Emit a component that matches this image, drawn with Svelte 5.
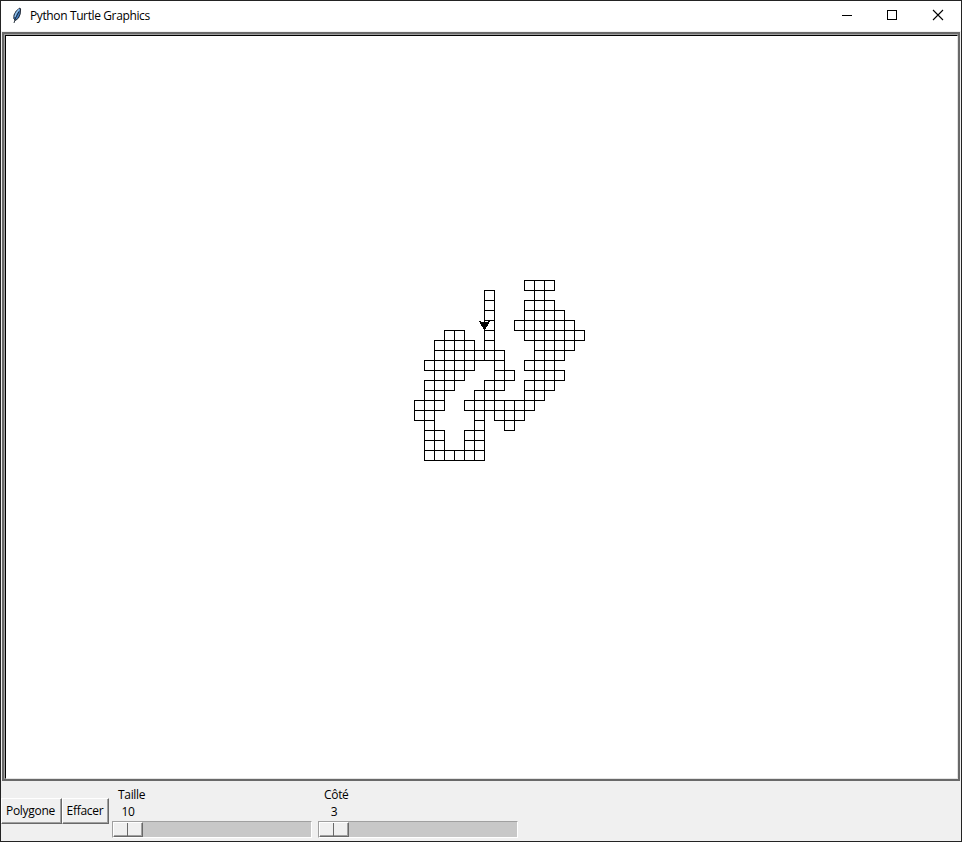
<script>
  // Drawing grid: each row lists its inclusive runs of cells.
  const CELL = 10;
  const rows = [
    [[11, 13]],
    [[7, 7], [12, 12]],
    [[7, 7], [11, 13]],
    [[7, 7], [11, 14]],
    [[7, 7], [10, 15]],
    [[3, 4], [7, 7], [11, 16]],
    [[2, 5], [7, 7], [12, 15]],
    [[2, 8], [12, 14]],
    [[1, 5], [8, 8], [11, 13]],
    [[2, 4], [8, 9], [12, 14]],
    [[1, 3], [7, 8], [11, 13]],
    [[1, 2], [6, 7], [11, 12]],
    [[0, 2], [5, 11]],
    [[0, 1], [6, 6], [8, 10]],
    [[1, 1], [6, 6], [9, 9]],
    [[1, 2], [5, 6]],
    [[1, 2], [5, 6]],
    [[1, 6]]
  ];
  const cells = rows.flatMap((runs, r) =>
    runs.flatMap(([a, b]) =>
      Array.from({ length: b - a + 1 }, (_, i) => ({ x: 408 + (a + i) * CELL, y: 244 + r * CELL }))
    )
  );
  const sliders = [
    { label: 'Taille', value: 10 },
    { label: 'Côté', value: 3 }
  ];
</script>

<div class="window">
  <header>
    <svg class="feather" width="12" height="18" viewBox="0 0 12 18">
      <path d="M8.8 1 L9.6 2 L9.2 7 L7.5 11 L4.5 13.5 L2.8 11.5 L3 8 L5.2 4 Z" fill="#3f79bd" stroke="#151a22" stroke-width="0.9" />
      <path d="M8.2 2.3 L5.2 6 L4 10" fill="none" stroke="#9bc8ee" stroke-width="1.3" />
      <path d="M8 4.5 L4.5 11 L3 16" fill="none" stroke="#15202c" stroke-width="0.9" />
    </svg>
    <h1>Python Turtle Graphics</h1>
    <div class="controls">
      <svg width="46" height="30" shape-rendering="crispEdges"><path d="M19 14.5h10" stroke="#000" /></svg>
      <svg width="46" height="30" shape-rendering="crispEdges"><rect x="18.5" y="9.5" width="9" height="9" fill="none" stroke="#000" /></svg>
      <svg width="46" height="30"><path d="M18 9l10 10M28 9l-10 10" stroke="#000" stroke-width="1.1" /></svg>
    </div>
  </header>

  <main>
    <svg width="951" height="742" shape-rendering="crispEdges">
      {#each cells as c}
        <rect x={c.x + 0.5} y={c.y + 0.5} width={CELL} height={CELL} fill="none" stroke="#000" />
      {/each}
      <path d="M473 285h2v1h3v-1h1v1h3v-1h2v1h-1v2h-1v2h-1v1h-1v2h-1v2h-1v-2h-1v-2h-1v-1h-1v-2h-1v-2h-1z" fill="#000" />
    </svg>
  </main>

  <footer>
    <button>Polygone</button>
    <button class="clear">Effacer</button>
    {#each sliders as s}
      <div class="scale">
        <span class="label">{s.label}</span>
        <span class="value">{s.value}</span>
        <div class="track"><div class="thumb"><i></i><i></i></div></div>
      </div>
    {/each}
  </footer>
</div>

<style>
  .window {
    box-sizing: border-box;
    width: 962px;
    height: 842px;
    border: 1px solid #232323;
    background: #f0f0f0;
    display: flex;
    flex-direction: column;
    overflow: hidden;
    font: 12px/16px "Open Sans", "Noto Sans", sans-serif;
    letter-spacing: -0.32px;
    color: #000;
  }
  header {
    height: 30px;
    flex: none;
    display: flex;
    background: #fff;
  }
  .feather { margin: 6px 0 0 10px; }
  h1 {
    margin: 7px 0 0 7px;
    font: inherit;
    letter-spacing: -0.38px;
    white-space: nowrap;
  }
  .controls { display: flex; margin-left: auto; }
  main {
    box-sizing: border-box;
    height: 749px;
    flex: none;
    margin: 1px 1px 0;
    border: 2px solid #696969;
    background: #a0a0a0;
    padding: 1px 0 0 1px;
  }
  main svg {
    display: block;
    background: #fff;
    border: 1px solid;
    border-color: #000 #e3e3e3 #e3e3e3 #000;
  }
  footer { display: flex; flex: 1; }
  button {
    box-sizing: border-box;
    width: 61px;
    height: 26px;
    margin: 17px 0 0;
    padding: 0 2px 0 0;
    background: #f0f0f0;
    border: 1px solid;
    border-color: #fff #696969 #696969 #fff;
    box-shadow: inset -1px -1px #a0a0a0;
    font: inherit;
    letter-spacing: -0.28px;
    color: inherit;
    border-radius: 0;
  }
  .clear { width: 47px; padding-right: 1px; }
  .scale {
    width: 200px;
    margin: 6px 0 0 3px;
    display: flex;
    flex-direction: column;
  }
  .scale + .scale { margin-left: 6px; }
  .label { height: 17px; padding-left: 6px; }
  .value { height: 17px; width: 32px; text-align: center; }
  .track {
    box-sizing: border-box;
    width: 200px;
    height: 17px;
    border: 1px solid;
    border-color: #a0a0a0 #fff #fff #a0a0a0;
    background: #c8c8c8;
  }
  .thumb {
    box-sizing: border-box;
    display: flex;
    width: 30px;
    height: 15px;
    border: 1px solid;
    border-color: #fff #696969 #696969 #fff;
    background: #f0f0f0;
    box-shadow: inset -1px -1px #a0a0a0;
  }
  .thumb i { width: 14px; }
  .thumb i:first-child {
    box-sizing: border-box;
    border-right: 1px solid #696969;
  }
</style>
